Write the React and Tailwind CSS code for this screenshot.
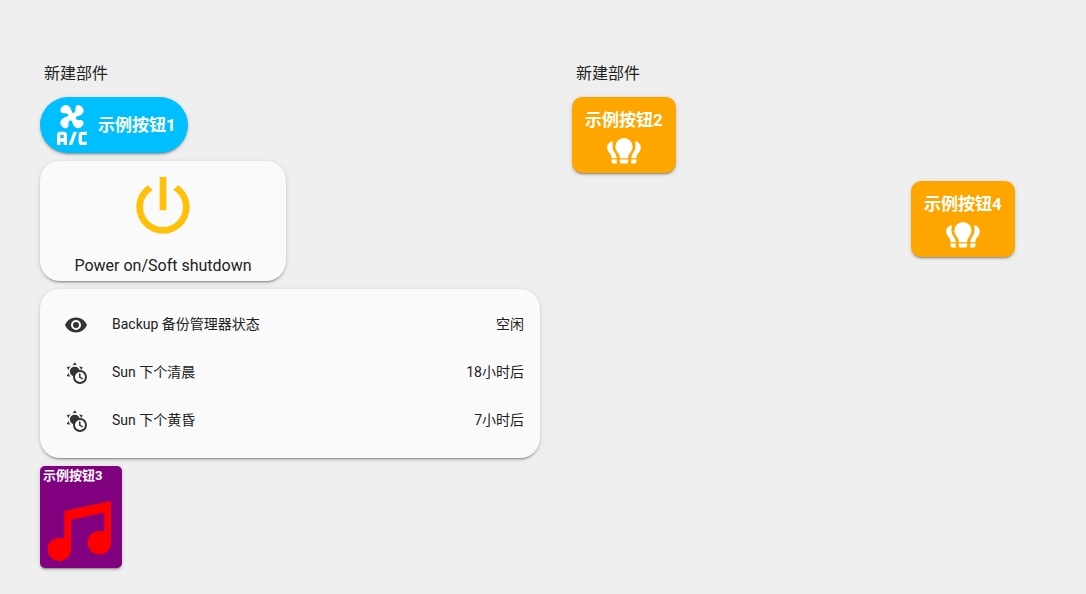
import clsx from 'clsx'

// ── Icons ───────────────────────────────────────────────────────────────────
function AirConditionerIcon({ className }) {
  return (
    <svg viewBox="0 0 24 24" fill="currentColor" className={className} aria-hidden="true">
      <path d="M6.59,0.66C8.93,-1.15 11.47,1.06 12.04,4.5C12.47,4.5 12.89,4.62 13.27,4.84C13.79,4.24 14.25,3.42 14.07,2.5C13.65,0.35 16.06,-1.39 18.35,1.58C20.16,3.92 17.95,6.46 14.5,7.03C14.5,7.46 14.39,7.89 14.16,8.27C14.76,8.78 15.58,9.24 16.5,9.06C18.63,8.64 20.38,11.04 17.41,13.34C15.07,15.15 12.53,12.94 11.96,9.5C11.53,9.5 11.11,9.37 10.74,9.15C10.22,9.75 9.75,10.58 9.93,11.5C10.35,13.64 7.94,15.39 5.65,12.42C3.83,10.07 6.05,7.53 9.5,6.97C9.5,6.54 9.63,6.12 9.85,5.74C9.25,5.23 8.43,4.76 7.5,4.94C5.37,5.36 3.62,2.96 6.59,0.66M5,16H7A2,2 0 0,1 9,18V24H7V22H5V24H3V18A2,2 0 0,1 5,16M5,18V20H7V18H5M12.93,16H15L12.07,24H10L12.93,16M18,16H21V18H18V22H21V24H18A2,2 0 0,1 16,22V18A2,2 0 0,1 18,16Z" />
    </svg>
  )
}

function PowerIcon({ className }) {
  return (
    <svg viewBox="0 0 24 24" fill="currentColor" className={className} aria-hidden="true">
      <path d="M16.56,5.44L15.11,6.89C16.84,7.94 18,9.83 18,12A6,6 0 0,1 12,18A6,6 0 0,1 6,12C6,9.83 7.16,7.94 8.88,6.88L7.44,5.44C5.36,6.88 4,9.28 4,12A8,8 0 0,0 12,20A8,8 0 0,0 20,12C20,9.28 18.64,6.88 16.56,5.44M13,3H11V13H13" />
    </svg>
  )
}

function EyeIcon({ className }) {
  return (
    <svg viewBox="0 0 24 24" fill="currentColor" className={className} aria-hidden="true">
      <path d="M12,9A3,3 0 0,0 9,12A3,3 0 0,0 12,15A3,3 0 0,0 15,12A3,3 0 0,0 12,9M12,17A5,5 0 0,1 7,12A5,5 0 0,1 12,7A5,5 0 0,1 17,12A5,5 0 0,1 12,17M12,4.5C7,4.5 2.73,7.61 1,12C2.73,16.39 7,19.5 12,19.5C17,19.5 21.27,16.39 23,12C21.27,7.61 17,4.5 12,4.5Z" />
    </svg>
  )
}

function SunClockIcon({ className }) {
  return (
    <svg viewBox="0 0 24 24" fill="currentColor" className={className} aria-hidden="true">
      <g transform="translate(-.3 -.5) scale(.92)">
        <path d="M12,2L14.39,5.42C13.65,5.15 12.84,5 12,5C11.16,5 10.35,5.15 9.61,5.42L12,2M3.34,7L7.5,6.65C6.9,7.16 6.36,7.78 5.94,8.5C5.5,9.24 5.25,10 5.11,10.79L3.34,7M3.36,17L5.12,13.23C5.26,14 5.53,14.78 5.95,15.5C6.37,16.24 6.91,16.86 7.5,17.37L3.36,17M20.65,7L18.88,10.79C18.74,10 18.47,9.23 18.05,8.5C17.63,7.78 17.1,7.15 16.5,6.64L20.65,7Z" />
        <circle cx="12" cy="12" r="5.3" />
      </g>
      <circle cx="16" cy="16" r="6" fill="#fafafa" stroke="currentColor" strokeWidth="2" />
      <path d="M15,12.5H16.5V15.8L19,17.3L18.3,18.6L15,16.6Z" />
    </svg>
  )
}

function LightbulbGroupIcon({ className }) {
  return (
    <svg viewBox="0 0 34 26" fill="currentColor" className={className} aria-hidden="true">
      <path d="M17,0A8.6,8.6 0 0 1 25.6,8.6C25.6,11.6 24.2,13.6 22.6,15.4C21.6,16.6 21.2,17.6 21.2,20.2H12.8C12.8,17.6 12.4,16.6 11.4,15.4C9.8,13.6 8.4,11.6 8.4,8.6A8.6,8.6 0 0 1 17,0Z" />
      <path d="M12.8,21.6H21.2V23.9A1.7,1.7 0 0 1 19.5,25.6H14.5A1.7,1.7 0 0 1 12.8,23.9Z" />
      <path d="M6.2,3.3C5.2,6 5.2,9 6,11.4C7,14.4 9.6,15.8 9.6,20.2H4.6C4.6,18 4,16.8 2.8,15.4C1.2,13.4 .2,12 .2,9.6C.2,6 2.6,3.6 6.2,3.3Z" />
      <path d="M27.8,3.3C28.8,6 28.8,9 28,11.4C27,14.4 24.4,15.8 24.4,20.2H29.4C29.4,18 30,16.8 31.2,15.4C32.8,13.4 33.8,12 33.8,9.6C33.8,6 31.4,3.6 27.8,3.3Z" />
      <path d="M4.6,21.6H9.6V23.6L10.2,25.6H6.3A1.7,1.7 0 0 1 4.6,23.9ZM29.4,21.6H24.4V23.6L23.8,25.6H27.7A1.7,1.7 0 0 0 29.4,23.9Z" />
    </svg>
  )
}

function MusicIcon({ className }) {
  return (
    <svg viewBox="0 0 24 24" fill="currentColor" className={className} aria-hidden="true">
      <path d="M21,3V15.5A3.5,3.5 0 0,1 17.5,19A3.5,3.5 0 0,1 14,15.5A3.5,3.5 0 0,1 17.5,12C18.04,12 18.55,12.12 19,12.34V6.47L9,8.6V17.5A3.5,3.5 0 0,1 5.5,21A3.5,3.5 0 0,1 2,17.5A3.5,3.5 0 0,1 5.5,14C6.04,14 6.55,14.12 7,14.34V6L21,3Z" />
    </svg>
  )
}

// ── Data ────────────────────────────────────────────────────────────────────
const ENTITIES = [
  { id: 'backup', name: 'Backup 备份管理器状态', state: '空闲',     icon: EyeIcon },
  { id: 'dawn',   name: 'Sun 下个清晨',          state: '18小时后', icon: SunClockIcon },
  { id: 'dusk',   name: 'Sun 下个黄昏',          state: '7小时后',  icon: SunClockIcon },
]

// ── Cards ───────────────────────────────────────────────────────────────────
const SHADOW = 'shadow-[0_2px_2px_0_rgba(0,0,0,0.14),0_1px_5px_0_rgba(0,0,0,0.12),0_3px_1px_-2px_rgba(0,0,0,0.2)]'

function SectionTitle({ children }) {
  return <h2 className="px-1 text-base leading-6 mb-[11px]">{children}</h2>
}

function LightButton({ label }) {
  return (
    <button type="button" className={clsx('flex flex-col items-center rounded-[10px] bg-[#ffa500] text-white w-[104px] pt-[11px] pb-[9px]', SHADOW)}>
      <span className="text-[17px] leading-6 font-bold whitespace-nowrap">{label}</span>
      <LightbulbGroupIcon className="w-[34px] h-[26px] mt-1.5" />
    </button>
  )
}

function EntitiesCard() {
  return (
    <ul className={clsx('w-full rounded-[20px] bg-[#fafafa] px-4 pt-4 pb-[17px] flex flex-col gap-2', SHADOW)}>
      {ENTITIES.map(({ id, name, state, icon: Icon }) => (
        <li key={id} className="flex items-center h-10 text-sm leading-5">
          <span className="w-10 flex justify-center shrink-0">
            <Icon className="w-6 h-6 text-[#333333]" />
          </span>
          <span className="flex-1 pl-4 pb-0.5">{name}</span>
          <span className="pb-0.5">{state}</span>
        </li>
      ))}
    </ul>
  )
}

// ── Page ────────────────────────────────────────────────────────────────────
export default function App() {
  return (
    <main className="min-h-screen bg-[#efefef] text-[#212121] font-['Roboto','Noto_Sans_CJK_SC',sans-serif] flex items-start gap-8 pt-[62px] pb-6 pl-10 pr-3.5">
      <section className="flex-1 min-w-0">
        <SectionTitle>新建部件</SectionTitle>
        <div className="flex flex-col items-start gap-2">
          <button type="button" className={clsx('flex items-center gap-1.5 rounded-full bg-[#00bfff] text-white h-14 pl-3 pr-3', SHADOW)}>
            <AirConditionerIcon className="w-10 h-10" />
            <span className="text-[17px] leading-6 font-bold whitespace-nowrap">示例按钮1</span>
          </button>

          <button type="button" className={clsx('flex flex-col items-center rounded-[20px] bg-[#fafafa] w-[246px] h-[120px] pt-1.5', SHADOW)}>
            <PowerIcon className="w-20 h-20 text-[#ffc107]" />
            <span className="text-base leading-6 mt-[7px]">Power on/Soft shutdown</span>
          </button>

          <EntitiesCard />

          <button type="button" className={clsx('flex flex-col items-start rounded-[5px] bg-[#800080] w-[82px] h-[102px] overflow-hidden', SHADOW)}>
            <span className="text-[13px] leading-5 font-bold text-white pl-[3px] whitespace-nowrap">示例按钮3</span>
            <MusicIcon className="w-20 h-20 shrink-0 self-center text-[#ff0000] mt-[5px]" />
          </button>
        </div>
      </section>

      <section className="flex-1 min-w-0">
        <SectionTitle>新建部件</SectionTitle>
        <div className="flex flex-col gap-2">
          <LightButton label="示例按钮2" />
          <div className="flex justify-end pr-[57px]">
            <LightButton label="示例按钮4" />
          </div>
        </div>
      </section>
    </main>
  )
}
